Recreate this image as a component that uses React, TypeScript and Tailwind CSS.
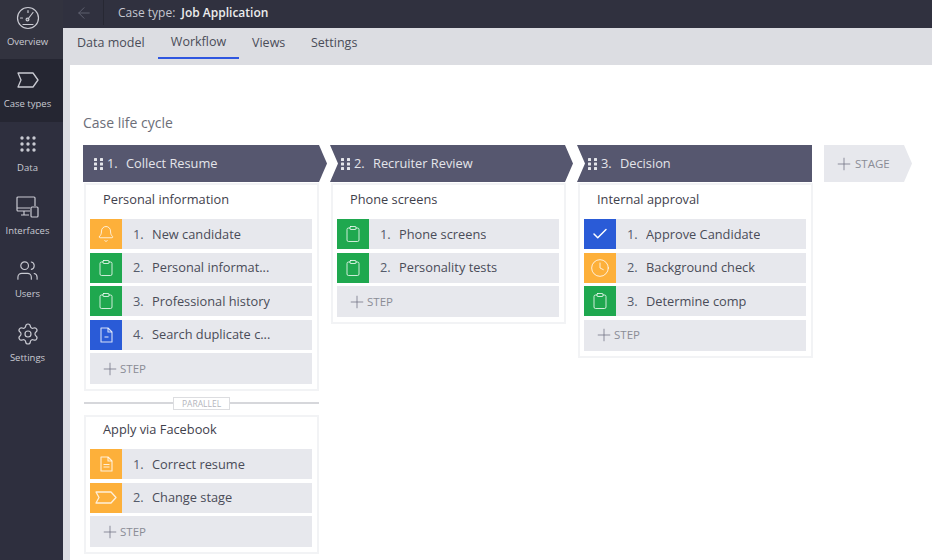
import React from "react";
import { ArrowLeft, Bell, Check, Clipboard, Clock, Plus, Settings, Users } from "lucide-react";

type Step = { label: string; icon: "bell" | "form" | "doc" | "docLines" | "check" | "clock" | "stage"; color: string };
type Process = { title: string; steps: Step[]; titleClass: string };

const GREEN = "bg-[#1fa84f]";
const ORANGE = "bg-[#fdb03a]";
const BLUE = "bg-[#2a5bd7]";

// Overview dial
const GaugeIcon = () => (
  <svg width="24" height="24" viewBox="0 0 24 24" fill="none" stroke="currentColor" strokeWidth="1.2">
    <circle cx="12" cy="12" r="10.5" />
    <path d="M7 18.5h10M12 13l5-6.5M4.5 12h2M12 4.5v2" strokeLinecap="round" />
    <circle cx="11.5" cy="13.5" r="1.4" />
  </svg>
);

const StageIcon = ({ height = 16 }: { height?: number }) => (
  <svg width="22" height={height} viewBox={`0 0 22 ${height}`} fill="none" stroke="currentColor" strokeWidth="1.3">
    <path
      d={`M1 1h15l5 ${(height - 2) / 2}-5 ${(height - 2) / 2}H1l3-${(height - 2) / 2}z`}
      strokeLinejoin="round"
    />
  </svg>
);

const DataIcon = () => (
  <svg width="16" height="16" viewBox="0 0 16 16" fill="currentColor">
    {[2, 8, 14].map((y) => [2, 8, 14].map((x) => <circle key={`${x}-${y}`} cx={x} cy={y} r="1.7" />))}
  </svg>
);

const InterfacesIcon = () => (
  <svg width="23" height="23" viewBox="0 0 23 23" fill="none" stroke="currentColor" strokeWidth="1.2">
    <path d="M14 15H2a1 1 0 0 1-1-1V2a1 1 0 0 1 1-1h16a1 1 0 0 1 1 1v8" />
    <path d="M1 12h13M5 19h8M8 15v4" />
    <rect x="15" y="11" width="7" height="10" rx="1" />
  </svg>
);

const Grip = () => (
  <svg width="10" height="14" viewBox="0 0 10 14" fill="currentColor" className="shrink-0">
    {[1, 5.5, 10].map((y) => [0, 6].map((x) => <rect key={`${x}-${y}`} x={x} y={y} width="3" height="3" rx="0.6" />))}
  </svg>
);

// page with a folded corner, one dash or a couple of lines on it
const DocIcon = ({ lines }: { lines?: boolean }) => (
  <svg width="13" height="16" viewBox="0 0 13 16" fill="none" stroke="currentColor" strokeWidth="1.1">
    <path d="M1 1h7l4 4v10H1z" strokeLinejoin="round" />
    <path d="M8 1v4h4" strokeLinejoin="round" />
    {lines ? <path d="M3.5 8.5h6M3.5 11h6" /> : <path d="M4.5 10h4" />}
  </svg>
);

const StepIcon = ({ icon }: { icon: Step["icon"] }) => {
  const cls = "text-white/80";
  switch (icon) {
    case "bell":
      return <Bell size={18} strokeWidth={1.3} className={cls} />;
    case "form":
      return <Clipboard size={18} strokeWidth={1.3} className={cls} />;
    case "doc":
      return <span className={cls}><DocIcon /></span>;
    case "docLines":
      return <span className={cls}><DocIcon lines /></span>;
    case "check":
      return <Check size={18} strokeWidth={2} className="text-white" />;
    case "clock":
      return <Clock size={20} strokeWidth={1.2} className={cls} />;
    default:
      return <span className={cls}><StageIcon height={13} /></span>;
  }
};

const StepRow = ({ step, index }: { step: Step; index: number }) => (
  <div className="flex h-[30px] items-center bg-[#e7e8ed] text-[12.8px] text-[#4a4c58]">
    <div className={`flex h-full w-8 shrink-0 items-center justify-center ${step.color}`}>
      <StepIcon icon={step.icon} />
    </div>
    <span className="ml-[11px] w-[19px] pt-px text-[#555b6b]">{index + 1}.</span>
    <span className="truncate pt-px">{step.label}</span>
  </div>
);

const ProcessCard = ({ process }: { process: Process }) => (
  <div className="border-2 border-[#f2f3f5] bg-white pr-[5px] pb-[5px] pl-1">
    <div className={`flex items-center pl-[13px] text-[12.8px] text-[#3f414c] ${process.titleClass}`}>
      {process.title}
    </div>
    <div className="flex flex-col gap-[3.5px]">
      {process.steps.map((step, i) => (
        <StepRow key={step.label} step={step} index={i} />
      ))}
      <div className="flex h-[31px] items-center bg-[#e7e8ed] pl-[10px] text-[11.5px] text-[#8a8c96]">
        <Plus size={20} strokeWidth={0.9} className="text-[#6d7080]" />
        STEP
      </div>
    </div>
  </div>
);

const stages: { name: string; shape: string; width: string; gap: string; process: Process }[] = [
  {
    name: "Collect Resume",
    shape: "[clip-path:polygon(0_0,236px_0,244px_50%,236px_100%,0_100%)]",
    width: "w-[244px]",
    gap: "mr-[3px]",
    process: {
      title: "Personal information",
      titleClass: "mb-[4px] h-[30px]",
      steps: [
        { label: "New candidate", icon: "bell", color: ORANGE },
        { label: "Personal informat...", icon: "form", color: GREEN },
        { label: "Professional history", icon: "form", color: GREEN },
        { label: "Search duplicate c...", icon: "doc", color: BLUE },
      ],
    },
  },
  {
    name: "Recruiter Review",
    shape: "[clip-path:polygon(0_0,235px_0,243px_50%,235px_100%,0_100%,8px_50%)]",
    width: "w-[243px]",
    gap: "mr-[4px]",
    process: {
      title: "Phone screens",
      titleClass: "mb-[4px] h-[30px]",
      steps: [
        { label: "Phone screens", icon: "form", color: GREEN },
        { label: "Personality tests", icon: "form", color: GREEN },
      ],
    },
  },
  {
    name: "Decision",
    shape: "[clip-path:polygon(0_0,100%_0,100%_100%,0_100%,8px_50%)]",
    width: "w-[235px]",
    gap: "",
    process: {
      title: "Internal approval",
      titleClass: "mb-[4px] h-[30px]",
      steps: [
        { label: "Approve Candidate", icon: "check", color: BLUE },
        { label: "Background check", icon: "clock", color: ORANGE },
        { label: "Determine comp", icon: "form", color: GREEN },
      ],
    },
  },
];

const parallelProcess: Process = {
  title: "Apply via Facebook",
  titleClass: "mb-[7px] h-[25px]",
  steps: [
    { label: "Correct resume", icon: "docLines", color: ORANGE },
    { label: "Change stage", icon: "stage", color: ORANGE },
  ],
};

const navItems = [
  { label: "Overview", icon: <GaugeIcon />, cls: "h-[59px] bg-[#32333f] pt-[6px]" },
  { label: "Case types", icon: <StageIcon />, cls: "h-[63px] bg-[#252632] pt-[9px]" },
  { label: "Data", icon: <DataIcon />, cls: "h-[63px] pt-[10px]" },
  { label: "Interfaces", icon: <InterfacesIcon />, cls: "h-[63px] pt-[10px]" },
  { label: "Users", icon: <Users size={23} strokeWidth={1.2} />, cls: "h-[63px] pt-[10px]" },
  { label: "Settings", icon: <Settings size={24} strokeWidth={1.2} />, cls: "h-[63px] pt-[11px]" },
];

const tabs = [
  { label: "Data model", cls: "ml-[14px] w-[81px]" },
  { label: "Workflow", cls: "w-[81px] justify-center border-b-2 border-[#2f56e0]" },
  { label: "Views", cls: "ml-[13px] w-[59px]" },
  { label: "Settings", cls: "w-[70px]" },
];

export default function App() {
  return (
    <div className="flex h-[560px] w-[932px] overflow-hidden bg-[#dcdde2] font-['Open_Sans',sans-serif]">
      <nav className="flex w-[63px] shrink-0 flex-col bg-[#2e2f3e] text-[#c9cad2]">
        {navItems.map((item) => (
          <div key={item.label} className={`flex flex-col items-center pr-[8px] ${item.cls}`}>
            <div className="flex h-[24px] items-center">{item.icon}</div>
            <span className="mt-[5px] text-[9.5px] leading-[13px] whitespace-nowrap">{item.label}</span>
          </div>
        ))}
      </nav>

      <div className="flex min-w-0 flex-1 flex-col">
        <header className="flex h-[28px] shrink-0 items-center bg-[#30313f] pb-[3px] text-[12px] text-[#c5c6cf]">
          <div className="flex h-[25px] w-[41px] items-center justify-center border-r border-[#272833] pl-px text-[#5f6170]">
            <ArrowLeft size={18} strokeWidth={1.3} />
          </div>
          <span className="ml-[14px]">Case type:</span>
          <span className="ml-[6px] font-semibold text-[#eceded]">Job Application</span>
        </header>

        <div className="flex h-[37px] shrink-0 text-[12.5px] text-[#4a4c58]">
          {tabs.map((tab) => (
            <div key={tab.label} className={`flex h-[31px] items-center ${tab.cls}`}>
              {tab.label}
            </div>
          ))}
        </div>

        <main className="ml-[7px] flex-1 overflow-hidden bg-white pl-[13px]">
          <h2 className="mt-[48px] h-[32px] text-[14px] leading-[19px] text-[#6c6e78]">Case life cycle</h2>
          <div className="flex items-start">
            {stages.map((stage, i) => (
              <div key={stage.name} className={`flex flex-col ${stage.gap}`}>
                <div
                  className={`flex h-[37px] items-center bg-[#56576f] pl-[11px] text-[12.8px] text-[#e4e5ea] ${stage.width} ${stage.shape}`}
                >
                  <Grip />
                  <span className="ml-[2px] w-[18px] pl-[1px]">{i + 1}.</span>
                  <span className="ml-[2px]">{stage.name}</span>
                </div>
                <div className="mt-[1px] ml-[1px] flex w-[235px] flex-col">
                  <ProcessCard process={stage.process} />
                  {i === 0 && (
                    <>
                      <div className="my-[5px] flex h-[14px] items-center">
                        <div className="h-[2px] flex-1 bg-[#d6d7db]" />
                        <span className="border border-[#dcdde0] px-[8px] text-[8.5px] leading-[11px] text-[#b4b6bd]">
                          PARALLEL
                        </span>
                        <div className="h-[2px] flex-1 bg-[#d6d7db]" />
                      </div>
                      <ProcessCard process={parallelProcess} />
                    </>
                  )}
                </div>
              </div>
            ))}
            <div className="ml-[11px] flex h-[37px] w-[88px] items-center bg-[#e7e8ed] pl-[10px] text-[11.5px] text-[#8a8c96] [clip-path:polygon(0_0,80px_0,88px_50%,80px_100%,0_100%)]">
              <Plus size={20} strokeWidth={0.9} className="text-[#6d7080]" />
              <span className="ml-px">STAGE</span>
            </div>
          </div>
        </main>
      </div>
    </div>
  );
}
